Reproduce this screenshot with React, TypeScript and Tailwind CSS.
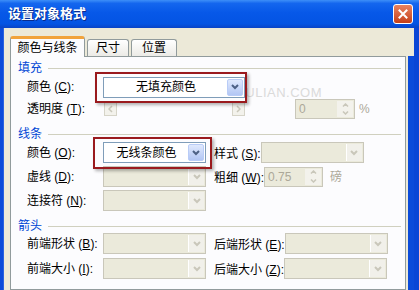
import React from 'react';

const font = { fontFamily: '"Liberation Sans", "Noto Sans CJK SC", sans-serif' };

const Chevron: React.FC<{ color: string }> = ({ color }) => (
  <svg width="8" height="6" viewBox="0 0 8 6">
    <polyline points="1,1 4,4 7,1" fill="none" stroke={color} strokeWidth="2" />
  </svg>
);

const Label: React.FC<{ text: string; hot: string; w: string }> = ({ text, hot, w }) => (
  <span className={`${w} shrink-0 text-[12px] leading-[14px] text-black whitespace-nowrap`}>
    {text} (<u>{hot}</u>):
  </span>
);

const Combo: React.FC<{ w: string; text?: string; disabled?: boolean }> = ({ w, text, disabled }) =>
  disabled ? (
    <div className={`${w} h-[21px] border border-[#C9C7BA] bg-[#EBEADB] flex items-stretch p-px`}>
      <div className="flex-1" />
      <div className="w-[16px] border-l border-white bg-[#F1F0EA] flex items-center justify-center">
        <Chevron color="#C9C7BA" />
      </div>
    </div>
  ) : (
    <div className={`${w} h-[21px] border border-[#7F9DB9] bg-white flex items-stretch p-px`}>
      <div className="flex-1 flex items-center justify-center text-[12px] leading-[14px] text-black">{text}</div>
      <div className="w-[16px] rounded-[2px] border border-[#B9CCF7] bg-gradient-to-b from-[#E0E9FD] to-[#B2C6F4] flex items-center justify-center">
        <Chevron color="#4D6185" />
      </div>
    </div>
  );

const Spinner: React.FC<{ w: string; value: string }> = ({ w, value }) => (
  <div className={`${w} h-[20px] border border-[#C9C7BA] bg-[#EBEADB] flex items-stretch p-px`}>
    <div className="flex-1 flex items-center pl-[2px] text-[12px] leading-[14px] text-[#ACA899]">{value}</div>
    <div className="w-[16px] flex flex-col gap-px bg-[#F3F2EC]">
      <div className="flex-1 flex items-center justify-center">
        <svg width="7" height="4" viewBox="0 0 7 4"><polyline points="1,3.5 3.5,1 6,3.5" fill="none" stroke="#C9C7BA" strokeWidth="1.5" /></svg>
      </div>
      <div className="flex-1 flex items-center justify-center">
        <svg width="7" height="4" viewBox="0 0 7 4"><polyline points="1,0.5 3.5,3 6,0.5" fill="none" stroke="#C9C7BA" strokeWidth="1.5" /></svg>
      </div>
    </div>
  </div>
);

const ArrowBtn: React.FC<{ dir: 'l' | 'r' }> = ({ dir }) => (
  <div className="w-[13px] h-[14px] border border-[#D6D4C8] bg-[#F3F2EC] flex items-center justify-center">
    <svg width="5" height="8" viewBox="0 0 5 8">
      <polyline points={dir === 'l' ? '4,1 1,4 4,7' : '1,1 4,4 1,7'} fill="none" stroke="#C9C7BA" strokeWidth="1.5" />
    </svg>
  </div>
);

const Section: React.FC<{ title: string; mt: string }> = ({ title, mt }) => (
  <div className={`${mt} h-[14px] pl-[7px] pr-[4px] flex items-center`}>
    <span className="text-[12px] leading-[14px] text-[#0046D5]">{title}</span>
    <div className="flex-1 ml-[6px] h-px bg-[#D0D0BF]" />
  </div>
);

const RedMark: React.FC<{ cls: string }> = ({ cls }) => (
  <span className={`absolute ${cls} border-2 border-[#9A1A1E] shadow-[2px_2px_3px_rgba(0,0,0,0.3)] pointer-events-none`} />
);

export default function App() {
  return (
    <div className="w-[419px] h-[290px] overflow-hidden flex flex-col bg-[#0A46D6]" style={font}>
      {/* title bar */}
      <div className="h-[28px] shrink-0 flex items-center pl-[8px] pr-[6px] bg-[linear-gradient(180deg,#3D8FF8_0%,#1466EE_12%,#0758E8_45%,#0454E3_85%,#0A44C6_100%)]">
        <span className="text-white font-bold text-[13px] leading-[16px] [text-shadow:1px_1px_0_#0A2C8C]">设置对象格式</span>
        <div className="ml-auto w-[20px] h-[20px] rounded-[3px] border border-white bg-gradient-to-b from-[#E9825E] to-[#C43E16] flex items-center justify-center">
          <svg width="10" height="10" viewBox="0 0 10 10">
            <path d="M1.5 1.5 L8.5 8.5 M8.5 1.5 L1.5 8.5" stroke="white" strokeWidth="2" strokeLinecap="square" />
          </svg>
        </div>
      </div>

      {/* body */}
      <div className="flex-1 flex">
        <div className="w-[4px] bg-[#0B4BDA] border-r border-[#2A62E0]" />
        <div className="w-[410px] bg-[#ECE9D8] flex flex-col pl-[6px] pt-[8px]">
          {/* tabs */}
          <div className="h-[20px] flex items-end relative z-10">
            <div className="w-[75px] h-[21px] mb-[-1px] bg-[#FCFCFE] border-x border-[#919B9C] border-t-[3px] border-t-[#F1A33B] rounded-t-[3px] flex items-center justify-center text-[12px] leading-[14px] text-black">
              颜色与线条
            </div>
            <div className="ml-[2px] w-[42px] h-[17px] bg-gradient-to-b from-white to-[#ECEBE6] border-x border-t border-[#919B9C] rounded-t-[3px] flex items-center justify-center text-[12px] leading-[14px] text-black">
              尺寸
            </div>
            <div className="ml-[2px] w-[46px] h-[17px] bg-gradient-to-b from-white to-[#ECEBE6] border-x border-t border-[#919B9C] rounded-t-[3px] flex items-center justify-center text-[12px] leading-[14px] text-black">
              位置
            </div>
          </div>

          <div className="flex-1 flex">
            {/* tab panel */}
            <div className="relative w-[396px] border border-[#919B9C] bg-[#FCFCFE] flex flex-col pt-[4px]">
              <span className="absolute left-[214px] top-[30px] text-[13px] leading-[11px] text-[#DADADA] tracking-[0.5px]">YIJULIAN.COM</span>

              <Section title="填充" mt="mt-0" />
              <div className="relative mt-[2px] h-[20px] pl-[16px] flex items-center">
                <Label text="颜色" hot="C" w="w-[76px]" />
                <div className="relative">
                  <Combo w="w-[142px]" text="无填充颜色" />
                  <RedMark cls="-left-[8px] -top-[5px] -right-[2px] -bottom-[5px]" />
                </div>
              </div>
              <div className="mt-[2px] h-[20px] pl-[16px] flex items-center">
                <Label text="透明度" hot="T" w="w-[77px]" />
                <div className="w-[141px] flex justify-between">
                  <ArrowBtn dir="l" />
                  <ArrowBtn dir="r" />
                </div>
                <div className="ml-[50px]">
                  <Spinner w="w-[60px]" value="0" />
                </div>
                <span className="ml-[4px] text-[12px] leading-[14px] text-[#ACA899]">%</span>
              </div>

              <Section title="线条" mt="mt-[8px]" />
              <div className="mt-[1px] h-[21px] pl-[16px] flex items-center">
                <Label text="颜色" hot="O" w="w-[76px]" />
                <div className="relative">
                  <Combo w="w-[103px]" text="无线条颜色" />
                  <RedMark cls="-left-[10px] -top-[5px] -right-[6px] -bottom-[6px]" />
                </div>
                <div className="ml-[8px]"><Label text="样式" hot="S" w="w-[81px]" /></div>
                <Combo w="w-[103px]" disabled />
              </div>
              <div className="mt-[3px] h-[21px] pl-[16px] flex items-center">
                <Label text="虚线" hot="D" w="w-[76px]" />
                <Combo w="w-[103px]" disabled />
                <div className="ml-[8px]"><Label text="粗细" hot="W" w="w-[81px]" /></div>
                <Spinner w="w-[59px]" value="0.75" />
                <span className="ml-[7px] text-[12px] leading-[14px] text-[#ACA899]">磅</span>
              </div>
              <div className="mt-[3px] h-[21px] pl-[16px] flex items-center">
                <Label text="连接符" hot="N" w="w-[76px]" />
                <Combo w="w-[103px]" disabled />
              </div>

              <Section title="箭头" mt="mt-[8px]" />
              <div className="mt-0 h-[21px] pl-[16px] flex items-center">
                <Label text="前端形状" hot="B" w="w-[76px]" />
                <Combo w="w-[103px]" disabled />
                <div className="ml-[8px]"><Label text="后端形状" hot="E" w="w-[81px]" /></div>
                <Combo w="w-[103px]" disabled />
              </div>
              <div className="mt-[4px] h-[21px] pl-[16px] flex items-center">
                <Label text="前端大小" hot="I" w="w-[76px]" />
                <Combo w="w-[103px]" disabled />
                <div className="ml-[8px]"><Label text="后端大小" hot="Z" w="w-[81px]" /></div>
                <Combo w="w-[103px]" disabled />
              </div>
            </div>
            <div className="ml-[2px] w-[6px] bg-[#0B4BDA]" />
          </div>
        </div>
        <div className="flex-1 bg-[#0A46D6]" />
      </div>
    </div>
  );
}
